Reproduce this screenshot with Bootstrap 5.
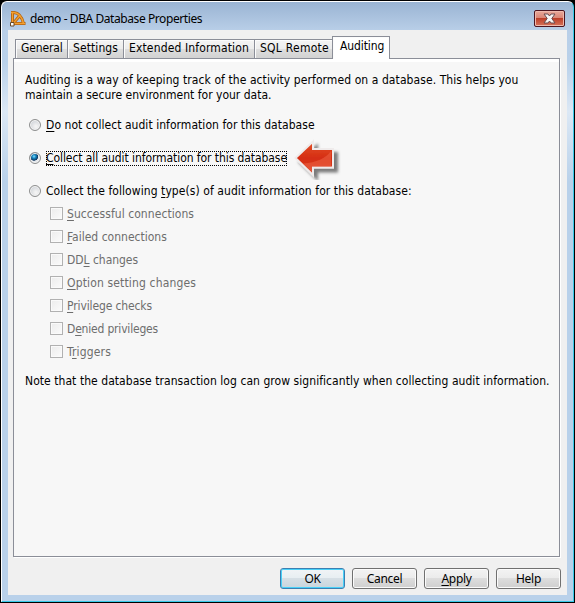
<!DOCTYPE html>
<html lang="en">
<head>
<meta charset="utf-8">
<title>demo - DBA Database Properties</title>
<link href="https://cdn.jsdelivr.net/npm/bootstrap@5.3.0/dist/css/bootstrap.min.css" rel="stylesheet">
<style>
html,body{height:603px;overflow:hidden}
body{background:#000;font:12px/15px "DejaVu Sans Condensed","DejaVu Sans",sans-serif;font-stretch:condensed;color:#000;white-space:nowrap}
u{text-underline-offset:2px;text-decoration-thickness:1px;text-decoration-skip-ink:none}
.window{width:573px;height:601px;margin:1px 0 0 1px;border:1px solid #fff;border-right-color:#38c9e8;border-bottom:1px solid #38c9e8;border-radius:6px 6px 0 0;background:linear-gradient(#9ab4d3 0,#b9cfe8 29px,#b9d1ea 60px,#dce8f5 110px,#b9d1ea 180px);padding:0 6px 6px}
.titlebar{height:28px;font:12px/16px "Noto Sans",sans-serif}
.title-text{margin:9px 0 0 4px;letter-spacing:-.42px}
.app-icon{margin:7px 0 0 1px}
.close-btn{width:31px;height:17px;border:1px solid #4c1520;border-radius:2px;background:linear-gradient(#e9a99b,#d98474 48%,#bd3f29 50%,#d6735b);box-shadow:inset 0 0 0 1px #efb9ad;margin:8px 2px 0 0;padding:0}
.client{background:#f0f0f0;height:565px;padding:6px 6px 0 5px}
.tabs{height:22px;padding-left:2px}
.tab-item{height:19px;border:1px solid #8b8e98;border-bottom:0;background:linear-gradient(#f4f4f4,#ededed 48%,#dedede 50%,#d2d2d2);padding:1px 0 0 5px;box-shadow:inset 1px 1px #fcfcfc;margin-right:-1px;position:relative}
.tab-item.active{height:23px;background:#fff;padding:2px 0 0 7px;z-index:2;margin-bottom:-1px}
.w1{width:53px;letter-spacing:-.15px}.w2{width:57px;letter-spacing:.09px}.w3{width:132px;letter-spacing:.141px}.w4{width:79px;letter-spacing:.259px}.w5{width:58px;letter-spacing:-.1px}
.panel{height:499px;width:547px;border:1px solid #8b8e98;box-shadow:1px 1px #fff;background:linear-gradient(#fff 3px,#f7f7f7 3px);padding:14px 11px}
.intro{letter-spacing:.079px}
.intro span{letter-spacing:.005px}
.radio{width:12px;height:12px;border:1px solid #8e8f8f;border-radius:50%;background:radial-gradient(circle at 60% 65%,#f3f3f3 10%,#d5d8dc 65%);box-shadow:inset 0 0 0 1px #f4f4f4;position:relative;top:-1px}
.radio.on{background:radial-gradient(circle at 40% 35%,#8be0fa 0,#1689c5 20%,#10365e 44%,#e4e8ec 50%)}
.opt{height:15px;margin-left:4px;margin-top:18px}
.opt.first{margin-top:15px}
.opt.last{margin-bottom:4px}
.opt .lbl{margin-left:5px}
.s1{letter-spacing:.045px}.s2{letter-spacing:-.076px}.s3{letter-spacing:.072px}
.focus{outline:1px dotted #000;outline-offset:-1px}
.check{width:13px;height:13px;border:1px solid #b1b1b1;background:linear-gradient(135deg,#ececec,#fbfbfb);box-shadow:inset 0 0 0 1px #fafafa;position:relative;top:-1px}
.sub{height:23px;color:#6d6d6d;margin-left:25px}
.sub .lbl{margin-left:4px}
.c1{letter-spacing:.061px}.c3{letter-spacing:-.041px}.c4{letter-spacing:.151px}.c5{letter-spacing:-.122px}.c6{letter-spacing:-.188px}.c7{letter-spacing:.164px}
.note{margin-top:10px;letter-spacing:.055px}
.arrow{margin:0 0 0 6px}
.actions{gap:7px;margin-top:11px}
.cmd{width:65px;height:21px;border:1px solid #707070;border-radius:3px;background:linear-gradient(#f3f3f3,#ebebeb 49%,#dddddd 50%,#cfcfcf);box-shadow:inset 0 0 0 1px #fbfbfb;padding:0;font:12px/17px "Noto Sans",sans-serif;color:#000;letter-spacing:-.3px}
.cmd.primary{border-color:#3c7fb1;box-shadow:inset 0 0 0 1px #48d0f8;background:linear-gradient(#f1f4f6,#e7eef2 49%,#d6dfe5 50%,#c9d5dd)}
</style>
<script src="https://cdn.jsdelivr.net/npm/bootstrap@5.3.0/dist/js/bootstrap.bundle.min.js"></script>
</head>
<body>
<div class="window">
 <div class="titlebar d-flex align-items-start">
  <svg class="app-icon" width="17" height="18" viewBox="0 0 17 18" fill="none"><g id="frame" stroke="#b06010" stroke-width="3"><path d="M3.500 15V3M2 3.500H5C10 4 13 8 14.500 14.500M3 14.500H16.500M4.500 14 10.500 7"/></g><path stroke="#f3a030" stroke-width="1.300" d="M3.500 15V3M2 3.500H5C10 4 13 8 14.500 14.500M3 14.500H16M4.500 14 10.500 7"/><path d="M1.500 13.500h3.500v3.500H1.500z" fill="#fff" stroke="#6a4a28"/></svg>
  <span class="title-text">demo - DBA Database Properties</span>
  <button class="close-btn ms-auto d-flex justify-content-center align-items-center" aria-label="Close"><svg width="13" height="11" viewBox="0 0 13 11"><path d="M1 1h4l1.500 2L8 1h4L8.800 5.500 12 10H8L6.500 8 5 10H1l3.200-4.500z" fill="#f5f5f5" stroke="#6a4c50"/></svg></button>
 </div>
 <div class="client">
  <div class="tabs d-flex align-items-end">
   <div class="tab-item w1">General</div>
   <div class="tab-item w2">Settings</div>
   <div class="tab-item w3">Extended Information</div>
   <div class="tab-item w4">SQL Remote</div>
   <div class="tab-item active w5">Auditing</div>
  </div>
  <div class="panel">
   <div class="intro">Auditing is a way of keeping track of the activity performed on a database. This helps you<br><span>maintain a secure environment for your data.</span></div>
   <div class="opt first d-flex align-items-center"><i class="radio"></i><span class="lbl s1"><u>D</u>o not collect audit information for this database</span></div>
   <div class="opt d-flex align-items-center"><i class="radio on"></i><span class="lbl focus s2"><u>C</u>ollect all audit information for this database</span>
    <svg class="arrow" width="50" height="42" viewBox="0 0 50 42"><defs><filter id="shade" x="-20%" y="-20%" width="150%" height="150%"><feDropShadow dx="4" dy="4" stdDeviation="1.500" flood-opacity=".5"/></filter><linearGradient id="red" x2="0" y2="1"><stop stop-color="#e4522a"/><stop offset=".5" stop-color="#d52d12"/><stop offset="1" stop-color="#dc4528"/></linearGradient></defs><path filter="url(#shade)" d="M2.500 20 20 3.500V11H40V29.500H20V37Z" fill="url(#red)" stroke="#efebeb" stroke-width="2"/><path d="M10 25.500Q30 24 38 13V28.500H19V34Z" fill="#ef6848" opacity=".5"/></svg></div>
   <div class="opt last d-flex align-items-center"><i class="radio"></i><span class="lbl s3">Collect the following <u>t</u>ype(s) of audit information for this database:</span></div>
   <div class="sub d-flex align-items-center"><i class="check"></i><span class="lbl c1"><u>S</u>uccessful connections</span></div>
   <div class="sub d-flex align-items-center"><i class="check"></i><span class="lbl"><u>F</u>ailed connections</span></div>
   <div class="sub d-flex align-items-center"><i class="check"></i><span class="lbl c3">DD<u>L</u> changes</span></div>
   <div class="sub d-flex align-items-center"><i class="check"></i><span class="lbl c4"><u>O</u>ption setting changes</span></div>
   <div class="sub d-flex align-items-center"><i class="check"></i><span class="lbl c5"><u>P</u>rivilege checks</span></div>
   <div class="sub d-flex align-items-center"><i class="check"></i><span class="lbl c6">D<u>e</u>nied privileges</span></div>
   <div class="sub d-flex align-items-center"><i class="check"></i><span class="lbl c7">T<u>r</u>iggers</span></div>
   <div class="note">Note that the database transaction log can grow significantly when collecting audit information.</div>
  </div>
  <div class="actions d-flex justify-content-end">
   <button class="cmd primary">OK</button><button class="cmd">Cancel</button><button class="cmd"><u>A</u>pply</button><button class="cmd">Help</button>
  </div>
 </div>
</div>
</body>
</html>
